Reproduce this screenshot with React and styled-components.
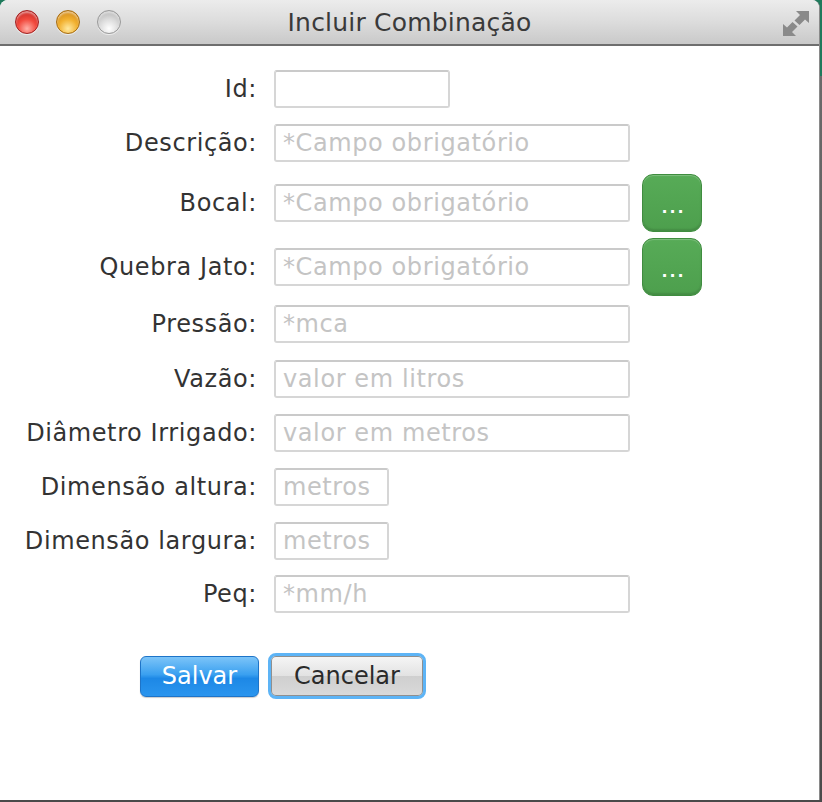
import React from "react";
import styled, { createGlobalStyle } from "styled-components";

const Global = createGlobalStyle`
  html, body { margin: 0; padding: 0; }
  body {
    width: 822px;
    height: 802px;
    overflow: hidden;
    background: linear-gradient(to bottom, #1f7a5c 0px, #1f7a5c 76px, #6a6a6a 76px, #4a4a4a 100%);
    font-family: "DejaVu Sans", "Liberation Sans", sans-serif;
  }
  #root { width: 822px; height: 802px; }
`;

const Window = styled.div`
  width: 819px;
  height: 800px;
  background: #ffffff;
  border-right: 1px solid #8a8a8a;
  border-radius: 8px 8px 0 0;
  overflow: hidden;
  display: flex;
  flex-direction: column;
`;

const TitleBar = styled.div`
  height: 44px;
  flex: none;
  display: flex;
  align-items: center;
  position: relative;
  background: linear-gradient(to bottom, #ececec 0%, #dcdcdc 50%, #c9c9c9 100%);
  border-bottom: 2px solid #6e6e6e;
  box-sizing: content-box;
`;

const Lights = styled.div`
  display: flex;
  gap: 17px;
  padding-left: 15px;
`;

const Light = styled.span`
  width: 24px;
  height: 24px;
  border-radius: 50%;
  box-sizing: border-box;
  border: 1px solid ${(p) => p.$edge};
  background: radial-gradient(circle at 50% 80%, ${(p) => p.$glow} 0%, ${(p) => p.$mid} 45%, ${(p) => p.$dark} 100%);
  box-shadow: inset 0 2px 2px rgba(255,255,255,0.5), 0 1px 0 rgba(255,255,255,0.6);
`;

const Title = styled.div`
  position: absolute;
  left: 0;
  right: 0;
  top: 0;
  height: 44px;
  line-height: 46px;
  text-align: center;
  font-size: 25px;
  letter-spacing: 0.2px;
  color: #3a3a3a;
  pointer-events: none;
`;

const Resize = styled.svg`
  position: absolute;
  right: 9px;
  top: 8px;
`;

const Content = styled.div`
  flex: 1;
  display: flex;
  flex-direction: column;
  padding-top: 24px;
`;

const Row = styled.div`
  display: flex;
  align-items: center;
  margin-top: ${(p) => p.$mt || 0}px;
`;

const Label = styled.label`
  width: 257px;
  flex: none;
  text-align: right;
  font-size: 24px;
  letter-spacing: 0.6px;
  color: #333333;
  margin-right: 17px;
  white-space: nowrap;
`;

const Field = styled.input`
  width: ${(p) => p.$w}px;
  height: 38px;
  box-sizing: border-box;
  border: 2px solid #d6d6d6;
  border-top-color: #cacaca;
  border-radius: 3px;
  padding: 0 7px;
  font-family: "DejaVu Sans", "Liberation Sans", sans-serif;
  font-size: 24px;
  letter-spacing: 0.6px;
  color: #333;
  background: #fff;
  outline: none;
  &::placeholder { color: #c4c4c4; }
`;

const Picker = styled.button`
  width: 60px;
  height: 58px;
  margin-left: 12px;
  border-radius: 11px;
  border: 1px solid #3f8d3f;
  background: linear-gradient(to bottom, #57ab57 0%, #4d9f4d 100%);
  box-shadow: inset 0 1px 1px rgba(255,255,255,0.25), inset 0 -2px 2px rgba(0,0,0,0.12);
  color: #ffffff;
  font-family: "DejaVu Sans", sans-serif;
  font-weight: bold;
  font-size: 16px;
  letter-spacing: 2px;
  line-height: 1;
  display: flex;
  align-items: center;
  justify-content: center;
  padding: 10px 0 0 3px;
`;

const Actions = styled.div`
  display: flex;
  align-items: center;
  margin-top: 40px;
  padding-left: 140px;
  gap: 9px;
`;

const Primary = styled.button`
  width: 119px;
  height: 41px;
  border-radius: 6px;
  border: 1px solid #1e74c8;
  background: linear-gradient(to bottom, #7cc4f8 0%, #3aa0f0 45%, #1d88e6 55%, #2a95ee 100%);
  color: #ffffff;
  font-family: "DejaVu Sans", sans-serif;
  font-size: 24px;
  padding: 0;
  box-shadow: 0 1px 1px rgba(0,0,0,0.2);
`;

const Secondary = styled.button`
  width: 158px;
  height: 46px;
  border-radius: 8px;
  border: 3px solid #5db4f6;
  background: linear-gradient(to bottom, #f6f6f6 0%, #e2e2e2 50%, #cfcfcf 51%, #dadada 100%);
  box-shadow: inset 0 0 0 1px #8f8f8f;
  color: #2a2a2a;
  font-family: "DejaVu Sans", sans-serif;
  font-size: 24px;
  padding: 0;
`;

const rows = [
  { label: "Id:", w: 176, mt: 0 },
  { label: "Descrição:", w: 356, ph: "*Campo obrigatório", mt: 16 },
  { label: "Bocal:", w: 356, ph: "*Campo obrigatório", mt: 12, pick: true },
  { label: "Quebra Jato:", w: 356, ph: "*Campo obrigatório", mt: 6, pick: true },
  { label: "Pressão:", w: 356, ph: "*mca", mt: 9 },
  { label: "Vazão:", w: 356, ph: "valor em litros", mt: 17 },
  { label: "Diâmetro Irrigado:", w: 356, ph: "valor em metros", mt: 16 },
  { label: "Dimensão altura:", w: 115, ph: "metros", mt: 16 },
  { label: "Dimensão largura:", w: 115, ph: "metros", mt: 16 },
  { label: "Peq:", w: 356, ph: "*mm/h", mt: 15 },
];

export default function App() {
  return (
    <>
      <Global />
      <Window>
        <TitleBar>
          <Lights>
            <Light $edge="#a32020" $glow="#ffb0a8" $mid="#f24a3e" $dark="#b81d1d" />
            <Light $edge="#a86d10" $glow="#ffe9a0" $mid="#f2b130" $dark="#c57a12" />
            <Light $edge="#9a9a9a" $glow="#ffffff" $mid="#dcdcdc" $dark="#a9a9a9" />
          </Lights>
          <Title>Incluir Combinação</Title>
          <Resize width="28" height="30" viewBox="0 0 28 30">
            <path d="M14 3 H27 V15 L23 11.5 L17.5 17 L12.5 12.5 L18 7 Z" fill="#8a8a8a" />
            <path d="M14 28 H1 V16 L5 19.5 L10.5 14 L15.5 18.5 L10 24 Z" fill="#8a8a8a" />
          </Resize>
        </TitleBar>
        <Content>
          {rows.map((r) => (
            <Row key={r.label} $mt={r.mt}>
              <Label>{r.label}</Label>
              <Field $w={r.w} placeholder={r.ph || ""} />
              {r.pick && <Picker>...</Picker>}
            </Row>
          ))}
          <Actions>
            <Primary>Salvar</Primary>
            <Secondary>Cancelar</Secondary>
          </Actions>
        </Content>
      </Window>
    </>
  );
}
